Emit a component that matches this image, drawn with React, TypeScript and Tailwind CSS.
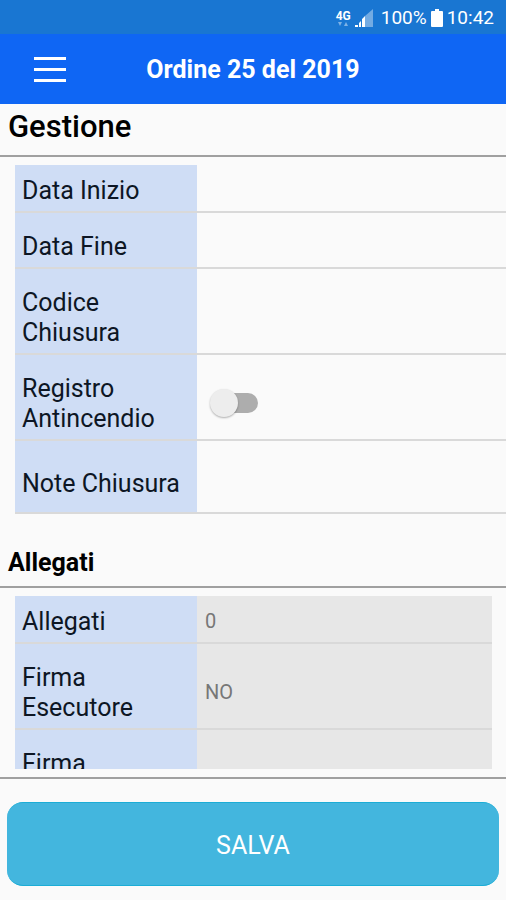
import React from "react";
import clsx from "clsx";

type FieldProps = {
  id: string;
  label: string;
  first?: boolean;
  className?: string;
  children: React.ReactNode;
};

const StatusBar = () => {
  return (
    <div className="flex h-[34px] flex-none items-center justify-end bg-[#1976d2] pt-[2px] pr-3 text-[19px] leading-6 text-white">
      {/* network */}
      <div className="mr-1 flex flex-col items-center">
        <span className="text-[12px] leading-3 font-bold">4G</span>
        <svg className="h-1 w-3" viewBox="0 0 12 4" fill="#7fb3e6">
          <path d="M1 0h4L3 4zM7 4h4L9 0z" />
        </svg>
      </div>
      {/* signal */}
      <svg className="mr-2 h-[18px] w-[18px]" viewBox="0 0 18 18">
        <path d="M10 7l8-7v18h-8z" fill="#73abe3" />
        <path d="M0 16h3v2H0zM4 14l2-2v6H4zM7 10l3-3v11H7z" fill="#fff" />
      </svg>
      <span>100%</span>
      <svg className="mx-1 h-[18px] w-3" viewBox="0 0 12 18" fill="#fff">
        <path d="M4 0h4v2h3q1 0 1 1v14q0 1-1 1H1q-1 0-1-1V3q0-1 1-1h3z" />
      </svg>
      <span>10:42</span>
    </div>
  );
};

const Header = () => {
  return (
    <header className="grid h-[70px] flex-none grid-cols-[100px_1fr_100px] items-center bg-[#0f66f4] pt-px text-white">
      <button type="button" aria-label="Menu" className="flex justify-center">
        <svg className="h-8 w-8" viewBox="0 0 32 32" fill="#fff">
          <path d="M0 3h32v3H0zM0 14h32v3H0zM0 25h32v3H0z" />
        </svg>
      </button>
      <h1 className="text-center text-[25px] leading-[30px] font-bold">Ordine 25 del 2019</h1>
    </header>
  );
};

const Field = ({ id, label, first, className, children }: FieldProps) => {
  return (
    <div className={clsx("flex border-b-2 border-[#d9d9d9]", className)}>
      <label
        htmlFor={id}
        className={clsx(
          "flex w-[182px] flex-none items-center bg-[#cfddf5] pr-2 pb-[5px] pl-[7px] text-[25px] leading-[30px] text-[#0d1624]",
          first ? "pt-[11px]" : "pt-[19px]"
        )}
      >
        {label}
      </label>
      <div className={clsx("flex min-w-0 flex-1 items-center", first ? "pt-1" : "pt-3")}>{children}</div>
    </div>
  );
};

const TextInput = ({ id, value, readOnly }: { id: string; value?: string; readOnly?: boolean }) => {
  return (
    <input
      id={id}
      type="text"
      defaultValue={value}
      readOnly={readOnly}
      className="w-full min-w-0 bg-transparent px-2 text-[20px] leading-6 text-[#777777] outline-none"
    />
  );
};

const Toggle = ({ id }: { id: string }) => {
  return (
    <span className="relative ml-[13px] flex h-[30px] w-12 items-center">
      <input
        id={id}
        type="checkbox"
        role="switch"
        className="peer ml-2 h-5 w-10 appearance-none rounded-full bg-[#adadad] checked:bg-[#8bb6e8]"
      />
      {/* knob */}
      <span className="pointer-events-none absolute left-0 h-7 w-7 rounded-full bg-[#ededed] shadow-[0_1px_2px_rgba(0,0,0,0.3)] peer-checked:left-5" />
    </span>
  );
};

const App = () => {
  return (
    <form
      className="flex h-screen flex-col bg-[#fafafa] font-['Roboto',sans-serif]"
      onSubmit={(e) => e.preventDefault()}
    >
      <StatusBar />
      <Header />

      <main className="mb-2 min-h-0 flex-1 overflow-y-auto [scrollbar-width:none]">
        <section>
          <h2 className="border-b-2 border-[#a0a0a0] px-2 pt-2 pb-[13px] text-[31px] leading-[30px] font-medium text-black">
            Gestione
          </h2>
          <div className="mt-2 ml-[15px]">
            <Field id="inizio" label="Data Inizio" first>
              <TextInput id="inizio" />
            </Field>
            <Field id="fine" label="Data Fine">
              <TextInput id="fine" />
            </Field>
            <Field id="codice" label="Codice Chiusura">
              <TextInput id="codice" />
            </Field>
            <Field id="registro" label="Registro Antincendio">
              <Toggle id="registro" />
            </Field>
            <Field id="note" label="Note Chiusura" className="min-h-[73px]">
              <TextInput id="note" />
            </Field>
          </div>
        </section>

        <section>
          <h2 className="mt-[34px] border-b-2 border-[#a0a0a0] px-2 pb-2 text-[25px] leading-[30px] font-bold text-black">
            Allegati
          </h2>
          <div className="mt-2 mr-[14px] ml-[15px] bg-[#e7e7e7]">
            <Field id="allegati" label="Allegati" first>
              <TextInput id="allegati" value="0" readOnly />
            </Field>
            <Field id="esecutore" label="Firma Esecutore">
              <TextInput id="esecutore" value="NO" readOnly />
            </Field>
            <Field id="firma" label="Firma">
              <TextInput id="firma" readOnly />
            </Field>
          </div>
        </section>
      </main>

      <footer className="flex-none border-t-2 border-[#a0a0a0] px-[7px] pt-[23px] pb-[14px]">
        <button
          type="submit"
          className="h-[84px] w-full rounded-2xl border-y border-[#1badd6] bg-[#43b6de] pt-1 text-[25px] leading-[30px] text-white"
        >
          SALVA
        </button>
      </footer>
    </form>
  );
};

export default App;
